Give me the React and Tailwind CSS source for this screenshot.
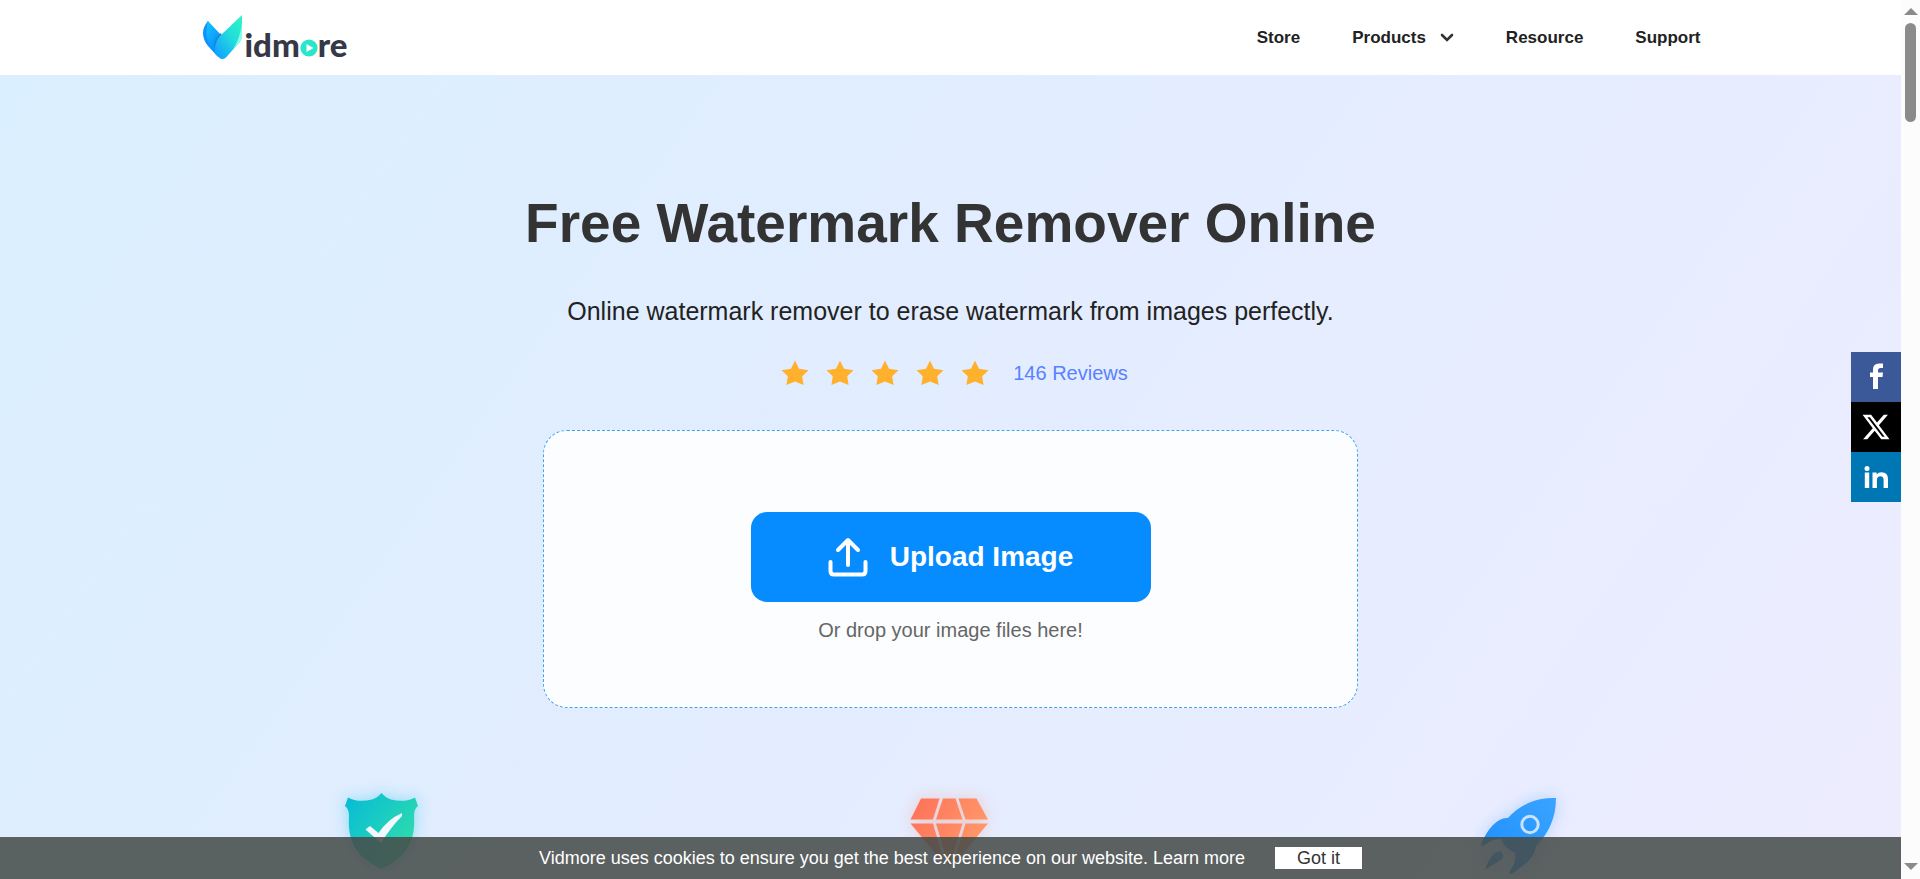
const stars = [1, 2, 3, 4, 5];

const FacebookIcon = () => (
  <svg viewBox="0 0 50 50" className="w-[50px] h-[50px]" fill="currentColor">
    <path d="M22 37V25H19V20.500H22V17.500Q22 11.500 28 11.500H32V16H29.500Q27 16 27 18.500V20.500H32L31.500 25H27V37Z" />
  </svg>
);

const XIcon = () => (
  <svg viewBox="0 0 24 24" className="w-[30px] h-[30px]" fill="currentColor">
    <path d="M18.244 2.25h3.308l-7.227 8.260 8.502 11.240H16.170l-5.214-6.817L4.990 21.750H1.680l7.730-8.835L1.254 2.250H8.080l4.713 6.231zm-1.161 17.520h1.833L7.084 4.126H5.117z" />
  </svg>
);

const LinkedinIcon = () => (
  <svg viewBox="0 0 50 50" className="w-[50px] h-[50px]" fill="currentColor">
    <circle cx="16" cy="16.500" r="2.500" />
    <path d="M13.800 20.500H18.200V36H13.800Z" />
    <path d="M21.500 20.500H25.700V22.600Q27.300 20.200 30.500 20.200Q37 20.200 37 27V36H32.600V28Q32.600 24.200 29.500 24.200Q25.900 24.200 25.900 28V36H21.500Z" />
  </svg>
);

const socials = [
  { name: 'Facebook', color: 'bg-[#3b5998]', icon: <FacebookIcon /> },
  { name: 'X', color: 'bg-black', icon: <XIcon /> },
  { name: 'LinkedIn', color: 'bg-[#0077b5]', icon: <LinkedinIcon /> },
];

const Logo = () => (
  <a href="#" aria-label="Vidmore" className="flex items-end gap-0.5">
    <svg viewBox="0 0 40 45" className="w-10 h-[45px]">
      <defs>
        <linearGradient id="leafLeft" x1="0" y1="0" x2="0.6" y2="1">
          <stop offset="0" stopColor="#12c8ff" />
          <stop offset="1" stopColor="#0a8cff" />
        </linearGradient>
        <linearGradient id="leafRight" x1="1" y1="0" x2="0.2" y2="1">
          <stop offset="0" stopColor="#2df8c4" />
          <stop offset="0.5" stopColor="#22dcdc" />
          <stop offset="1" stopColor="#12a4ff" />
        </linearGradient>
      </defs>
      <path d="M5 6Q0 12 0 18Q0 25 5 31L15 42L17 26Z" fill="#0b93ff" />
      <path d="M5 6L18 20Q12 24 11 32L11 36Q0 24 5 6Z" fill="url(#leafLeft)" />
      <path d="M18 18Q10 23 11 34L20 24Z" fill="#1e86d8" />
      <path d="M39 0L19 19Q11 26 12 38L16 42.500Q19 45.500 23 42.500L35 29Q39 25 39 20Z" fill="url(#leafRight)" />
      <path d="M39 8V20Q39 25 36 28L30 34Q37 24 39 8Z" fill="#8dfbe0" />
    </svg>
    <span className="flex items-baseline font-['Lato',sans-serif] font-black text-[33px] leading-8 text-[#363848]">
      idm
      <svg viewBox="0 0 18 18" className="w-[18px] h-[18px]">
        <circle cx="9" cy="9" r="8.6" fill="#2be5cb" />
        <path d="M6.5 5L13.5 9L6.5 13Z" fill="#fff" />
      </svg>
      re
    </span>
  </a>
);

const Header = () => (
  <header className="h-[75px] shrink-0 bg-white">
    <div className="max-w-[1500px] h-full mx-auto flex items-center justify-between">
      <div className="pl-0.5">
        <Logo />
      </div>
      <nav className="flex items-center gap-[52px] font-bold text-[17px] text-[#222]">
        <a href="#">Store</a>
        <button className="flex items-center gap-[14px] font-bold">
          Products
          <svg viewBox="0 0 14 9" className="w-[14px] h-[9px]">
            <path d="M2 2L7 7L12 2" fill="none" stroke="#333" strokeWidth="2.6" strokeLinecap="round" />
          </svg>
        </button>
        <a href="#">Resource</a>
        <a href="#">Support</a>
      </nav>
    </div>
  </header>
);

const Star = () => (
  <svg viewBox="0 0 28 26" className="w-7 h-[26px]">
    <path d="M14 0.5L18 8.8L27.5 10.2L21.2 16.3L22.6 25L14 21.6L5.4 25L6.8 16.3L0.5 10.2L10 8.8Z" fill="#ffb02c" />
  </svg>
);

const UploadIcon = () => (
  <svg viewBox="0 0 40 40" className="w-10 h-10">
    <g fill="none" stroke="#fff" strokeWidth="4" strokeLinecap="round" strokeLinejoin="round">
      <path d="M20 28V3M10 13L20 3L30 13" />
      <path d="M2.5 25V34Q2.5 37.5 6 37.5H34Q37.5 37.5 37.5 34V25" />
    </g>
  </svg>
);

const ShieldIcon = () => (
  <svg viewBox="3 0 120 120" className="w-[120px] h-[120px] drop-shadow-[0_0_8px_rgba(10,195,225,0.4)]">
    <defs>
      <linearGradient id="shield" x1="0" y1="0" x2="1" y2="0.8">
        <stop offset="0" stopColor="#05bbd8" />
        <stop offset="1" stopColor="#34dfa8" />
      </linearGradient>
    </defs>
    <path
      d="M61.500 22Q66 27 71 28.500Q85 32 95 26.500L98 35Q94 38 94 45C95 62 93 84 61.500 98C30 84 28 62 29 45Q29 38 25 35L28 26.500Q38 32 52 28.500Q57 27 61.500 22Z"
      fill="url(#shield)"
    />
    <path d="M46 58L50 55L58.500 62Q68 48 82 42L82 45Q71 56 61 72L46 59Z" fill="#f3f7ff" />
  </svg>
);

const DiamondIcon = () => (
  <svg viewBox="1 0 120 120" className="w-[120px] h-[120px] drop-shadow-[0_0_8px_rgba(255,120,90,0.3)]">
    <defs>
      <linearGradient id="diamond" gradientUnits="userSpaceOnUse" x1="20" y1="30" x2="98" y2="70">
        <stop offset="0" stopColor="#ff7058" />
        <stop offset="1" stopColor="#ff9c6b" />
      </linearGradient>
    </defs>
    <g fill="url(#diamond)">
      <path d="M31 27.500H49.500L43 48.500H20.500Z" />
      <path d="M53 27.500H65.500L72.500 48.500H46Z" />
      <path d="M68.500 27.500H86.500L98 48.500H75.500Z" />
      <path d="M20.500 52.500H43L55 94Z" />
      <path d="M46 52.500H72.500L59 96Z" />
      <path d="M75.500 52.500H98L63 94Z" />
    </g>
  </svg>
);

const RocketIcon = () => (
  <svg viewBox="-1 0 120 120" className="w-[120px] h-[120px] drop-shadow-[0_0_8px_rgba(40,150,255,0.3)]">
    <defs>
      <linearGradient id="rocket" x1="0" y1="1" x2="1" y2="0">
        <stop offset="0" stopColor="#1b8cff" />
        <stop offset="1" stopColor="#3aa4ff" />
      </linearGradient>
    </defs>
    <g fill="url(#rocket)">
      <path d="M96 27Q67 26 48 47C38 46 28 57 21 73Q20 76 25 74Q31 68 41 68Q43 76 55 82Q57 91 49 101Q49 104 53 102C66 93 75 86 76 75Q96 55 96 27Z" />
      <path d="M25 99Q31 80 41 80Q47 86 38 91Q32 94 25 99Z" />
    </g>
    <circle cx="70" cy="53.500" r="8.200" fill="none" stroke="#c9e2ff" strokeWidth="3" />
  </svg>
);

const CookieBar = () => (
  <div className="absolute inset-x-0 bottom-0 h-[42px] flex items-center justify-center gap-[30px] bg-[#464c49]/87 text-lg text-white">
    <p>
      Vidmore uses cookies to ensure you get the best experience on our website. <a href="#">Learn more</a>
    </p>
    <button className="w-[87px] h-[22px] bg-white text-[#333] leading-[22px]">Got it</button>
  </div>
);

// up arrow, thumb and down arrow along the right edge
const Scrollbar = () => (
  <div className="w-[19px] shrink-0 flex flex-col items-center bg-[#fcfcfc] py-2">
    <svg viewBox="0 0 14 8" className="w-[14px] h-2">
      <path d="M7 0L14 7H0Z" fill="#8b8b8b" />
    </svg>
    <div className="w-[11px] h-[99px] mt-[7px] rounded-full bg-[#8b8b8b]" />
    <svg viewBox="0 0 14 8" className="w-[14px] h-2 mt-auto">
      <path d="M0 0H14L7 7Z" fill="#8b8b8b" />
    </svg>
  </div>
);

const App = () => {
  return (
    <div className="h-screen flex overflow-hidden font-['Liberation_Sans',Arial,sans-serif]">
      <div className="relative flex-1 flex flex-col overflow-hidden">
        <Header />

        <main className="flex-1 bg-[linear-gradient(125deg,#daefff_0%,#e2edff_45%,#e8edff_75%,#eeecff_100%)]">
          <div className="max-w-[1500px] mx-auto pt-[112px] flex flex-col items-center">
            <h1 className="text-[55px] leading-[72px] font-bold text-[#333]">Free Watermark Remover Online</h1>
            <p className="mt-[34px] text-[25px] leading-9 text-[#222]">
              Online watermark remover to erase watermark from images perfectly.
            </p>

            <div className="mt-[30px] pl-2 flex items-center">
              <div className="flex gap-[17px]" role="img" aria-label="5 stars">
                {stars.map((n) => (
                  <Star key={n} />
                ))}
              </div>
              <a href="#" className="ml-6 text-xl leading-7 text-[#5881ff]">
                146 Reviews
              </a>
            </div>

            <div className="mt-[43px] w-full max-w-[815px] h-[278px] flex flex-col items-center pt-[81px] rounded-3xl border border-dashed border-[#3fa2f7] bg-white/85">
              <button className="w-[400px] h-[90px] flex items-center justify-center gap-[22px] rounded-2xl bg-[#078cff] text-white text-[28px] font-bold">
                <UploadIcon />
                Upload Image
              </button>
              <p className="mt-[14px] text-xl leading-7 text-[#666]">Or drop your image files here!</p>
            </div>

            <div className="mt-[63px] w-full grid grid-cols-3 gap-[204px] justify-items-center">
              <ShieldIcon />
              <DiamondIcon />
              <RocketIcon />
            </div>
          </div>
        </main>

        <div className="absolute right-0 top-[352px] flex flex-col">
          {socials.map((s) => (
            <a
              key={s.name}
              href="#"
              aria-label={s.name}
              className={`w-[50px] h-[50px] flex items-center justify-center text-white ${s.color}`}
            >
              {s.icon}
            </a>
          ))}
        </div>

        <CookieBar />
      </div>
      <Scrollbar />
    </div>
  );
};

export default App;
